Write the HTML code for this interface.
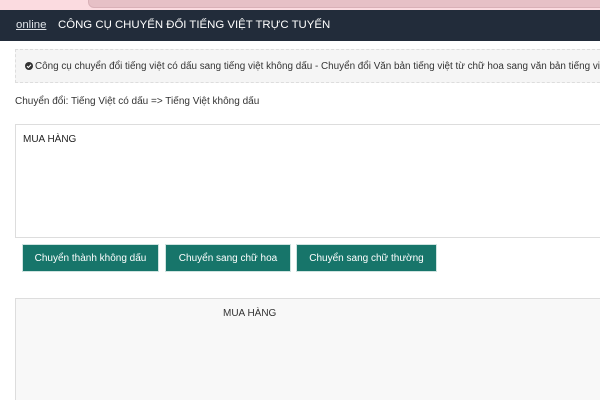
<!DOCTYPE html>
<html><head><meta charset="utf-8"><style>
*{margin:0;padding:0;box-sizing:border-box}
html,body{width:600px;height:400px;overflow:hidden}
body{background:#fff;font-family:"Liberation Sans",sans-serif;position:relative}
.top{position:absolute;left:0;top:0;width:600px;height:10px;background:#fbdbe0;overflow:hidden}
.top i{position:absolute;left:88px;top:-6px;width:540px;height:14px;background:#e6c0c6;border-radius:6px;border:1px solid #d9b0b7}
.nav{position:absolute;left:0;top:10px;width:600px;height:31px;background:#222c3a;color:#fff;font-size:11.4px;line-height:31px;white-space:nowrap}
.nav u{position:absolute;left:16px;color:#dfe3e8}
.nav span{position:absolute;left:58px}
.info{position:absolute;left:15px;top:49px;width:590px;height:34px;background:#f5f5f5;border:1px dashed #ddd;border-right:none;font-size:9.9px;color:#333;line-height:33px;padding-left:9px;white-space:nowrap;overflow:hidden}
.info svg{vertical-align:-1px;margin-right:2px}
.lab{position:absolute;left:15px;top:96px;font-size:10px;color:#333;white-space:nowrap}
.ta{position:absolute;left:15px;top:124px;width:590px;height:114px;border:1px solid #ddd;border-right:none;background:#fff;font-size:10px;color:#222;padding:9px 7px}
.btn{position:absolute;top:244px;height:28px;background:#17756a;color:#fff;font-size:10px;line-height:28px;text-align:center;border:1px solid #cfe3e0}
.out{position:absolute;left:15px;top:298px;width:590px;height:110px;border:1px solid #ddd;border-right:none;background:#f8f8f8;font-size:10px;color:#333}
.out span{position:absolute;left:207px;top:9px}
</style></head><body>
<div class="top"><i></i></div>
<div class="nav"><u>online</u><span>CÔNG CỤ CHUYỂN ĐỔI TIẾNG VIỆT TRỰC TUYẾN</span></div>
<div class="info"><svg width="8" height="8" viewBox="0 0 8 8"><circle cx="4" cy="4" r="4" fill="#333"/><path d="M2 4.2L3.4 5.5L6 2.7" stroke="#fff" stroke-width="1.1" fill="none"/></svg>Công cụ chuyển đổi tiếng việt có dấu sang tiếng việt không dấu - Chuyển đổi Văn bản tiếng việt từ chữ hoa sang văn bản tiếng việt chữ thường</div>
<div class="lab">Chuyển đổi: Tiếng Việt có dấu =&gt; Tiếng Việt không dấu</div>
<div class="ta">MUA HÀNG</div>
<div class="btn" style="left:22px;width:137px">Chuyển thành không dấu</div>
<div class="btn" style="left:165px;width:126px">Chuyển sang chữ hoa</div>
<div class="btn" style="left:296px;width:141px">Chuyển sang chữ thường</div>
<div class="out"><span>MUA HÀNG</span></div>
</body></html>
